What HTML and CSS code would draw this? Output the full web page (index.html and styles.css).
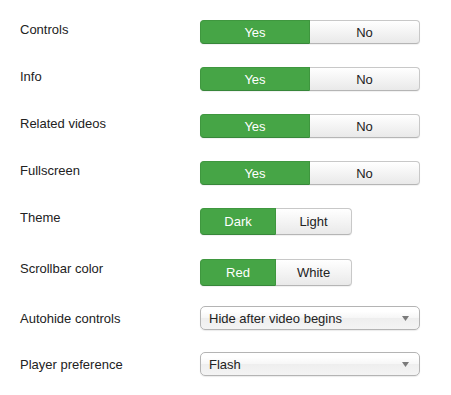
FILE: index.html
```html
<!DOCTYPE html>
<html>
<head>
<meta charset="utf-8">
<link rel="stylesheet" href="styles.css">
</head>
<body>
<div class="form">
  <div class="row">
    <div class="label">Controls</div>
    <div class="seg seg-yesno"><span class="opt on">Yes</span><span class="opt">No</span></div>
  </div>
  <div class="row">
    <div class="label">Info</div>
    <div class="seg seg-yesno"><span class="opt on">Yes</span><span class="opt">No</span></div>
  </div>
  <div class="row">
    <div class="label">Related videos</div>
    <div class="seg seg-yesno"><span class="opt on">Yes</span><span class="opt">No</span></div>
  </div>
  <div class="row">
    <div class="label">Fullscreen</div>
    <div class="seg seg-yesno"><span class="opt on">Yes</span><span class="opt">No</span></div>
  </div>
  <div class="row row-wide">
    <div class="label">Theme</div>
    <div class="seg seg-pair"><span class="opt on">Dark</span><span class="opt">Light</span></div>
  </div>
  <div class="row">
    <div class="label">Scrollbar color</div>
    <div class="seg seg-pair"><span class="opt on">Red</span><span class="opt">White</span></div>
  </div>
  <div class="row row-short">
    <div class="label label-select">Autohide controls</div>
    <div class="select"><span>Hide after video begins</span><svg class="caret" width="7" height="5" viewBox="0 0 7 5"><path d="M0 0H7L3.5 5Z" fill="#7a7a7a"/></svg></div>
  </div>
  <div class="row">
    <div class="label label-select">Player preference</div>
    <div class="select"><span>Flash</span><svg class="caret" width="7" height="5" viewBox="0 0 7 5"><path d="M0 0H7L3.5 5Z" fill="#7a7a7a"/></svg></div>
  </div>
</div>
</body>
</html>
```

FILE: styles.css
```css
html, body {
  margin: 0;
  padding: 0;
  background: #fff;
}
body {
  font-family: "Liberation Sans", Arial, Helvetica, sans-serif;
  font-size: 13px;
  color: #222;
}
.form {
  padding: 20px 0 0 20px;
  display: flex;
  flex-direction: column;
}
.row {
  display: flex;
  align-items: flex-start;
  height: 47px;
}
.row-wide {
  height: 51px;
}
.row-short {
  height: 46px;
}
.label {
  width: 180px;
  line-height: 16px;
  padding-top: 2px;
  flex: none;
}
.label-select {
  padding-top: 5px;
}
.seg {
  display: flex;
}
.opt {
  box-sizing: border-box;
  display: flex;
  align-items: center;
  justify-content: center;
  color: #222;
  background: linear-gradient(#ffffff, #e9e9e9);
  border: 1px solid #c8c8c8;
  border-bottom-color: #b5b5b5;
  box-shadow: 0 1px 1px rgba(0, 0, 0, 0.06);
}
.opt:first-child {
  border-radius: 4px 0 0 4px;
}
.opt:last-child {
  border-left: none;
  border-radius: 0 4px 4px 0;
}
.opt.on {
  background: #46a546;
  border-color: #3f973f;
  border-bottom-color: #37863a;
  color: #fff;
}
.seg-yesno .opt {
  width: 110px;
  height: 24px;
}
.seg-pair .opt {
  width: 76px;
  height: 27px;
}
.select {
  box-sizing: border-box;
  width: 220px;
  height: 24px;
  display: flex;
  align-items: center;
  padding: 0 10px 0 8px;
  border: 1px solid #b4b4b4;
  border-radius: 5px;
  background: linear-gradient(#ffffff 20%, #f6f6f6 50%, #eeeeee 52%, #f4f4f4 100%);
  box-shadow: 0 1px 1px rgba(0, 0, 0, 0.08);
  color: #222;
}
.caret {
  margin-left: auto;
}
```
